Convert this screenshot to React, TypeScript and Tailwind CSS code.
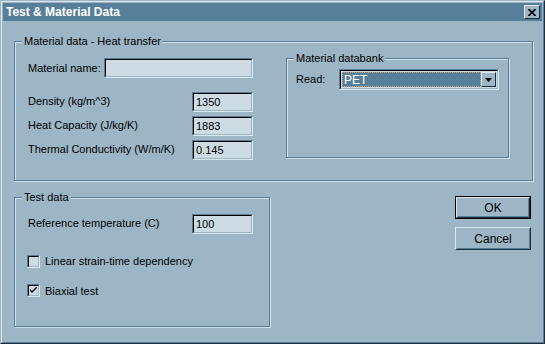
import React from 'react'

const font = { fontFamily: '"Liberation Sans", Arial, sans-serif' }

const Sunken: React.FC<{ className?: string; children?: React.ReactNode }> = ({ className = '', children }) => (
  <div className={`border border-t-[#587f99] border-l-[#587f99] border-b-[#dde8ee] border-r-[#dde8ee] ${className}`}>
    <div className="h-full w-full border border-t-black border-l-black border-b-[#9cb6c5] border-r-[#9cb6c5] bg-[#cddce4] flex items-center pl-[2px] text-black">
      {children}
    </div>
  </div>
)

const Group: React.FC<{ title: string; className?: string; children?: React.ReactNode }> = ({ title, className = '', children }) => (
  <div className={`relative border border-[#587f99] shadow-[inset_1px_1px_0_#d3e0e7,1px_1px_0_#d3e0e7] ${className}`}>
    <span className="absolute left-[7px] top-[-8px] bg-[#9cb6c5] px-[2px] leading-[14px] text-black">{title}</span>
    {children}
  </div>
)

const Checkbox: React.FC<{ checked?: boolean; label: string }> = ({ checked, label }) => (
  <div className="flex items-center gap-[5px]">
    <div className="w-[13px] h-[13px] border border-t-[#587f99] border-l-[#587f99] border-b-[#dde8ee] border-r-[#dde8ee]">
      <div className="w-full h-full border border-t-black border-l-black border-b-[#9cb6c5] border-r-[#9cb6c5] bg-[#cddce4] flex items-center justify-center">
        {checked && (
          <svg width="7" height="7" viewBox="0 0 7 7">
            <path d="M0 2 L0 4 L2 6 L7 1 L7 -1 L2 4 Z" fill="black" />
          </svg>
        )}
      </div>
    </div>
    <span>{label}</span>
  </div>
)

const Button: React.FC<{ label: string; isDefault?: boolean }> = ({ label, isDefault }) => (
  <div className={`w-[76px] ${isDefault ? 'h-[23px] border border-black' : 'h-[23px]'}`}>
    <div className="h-full w-full border border-t-[#dde8ee] border-l-[#dde8ee] border-b-[#1e2e3a] border-r-[#1e2e3a]">
      <div className="h-full w-full border border-t-[#9cb6c5] border-l-[#9cb6c5] border-b-[#587f99] border-r-[#587f99] flex items-center justify-center text-black text-[12px]">
        {label}
      </div>
    </div>
  </div>
)

export default function App() {
  return (
    <div style={font} className="w-[545px] h-[344px] bg-[#9cb6c5] text-[11px] text-black overflow-hidden">
      <div className="w-full h-full border border-t-[#9cb6c5] border-l-[#9cb6c5] border-b-[#1e2e3a] border-r-[#1e2e3a]">
        <div className="w-full h-full border border-t-[#dde8ee] border-l-[#dde8ee] border-b-[#587f99] border-r-[#587f99] p-px flex flex-col">
          {/* title bar */}
          <div className="h-[18px] bg-[#587f99] flex items-center justify-between pl-[3px] pr-[2px] shrink-0">
            <span className="text-white font-bold text-[12px]">Test &amp; Material Data</span>
            <div className="w-[16px] h-[14px] border border-t-[#dde8ee] border-l-[#dde8ee] border-b-[#1e2e3a] border-r-[#1e2e3a] bg-[#9cb6c5] flex items-center justify-center">
              <svg width="8" height="7" viewBox="0 0 8 7">
                <path d="M0.5 0 L7.5 7 M7.5 0 L0.5 7" stroke="black" strokeWidth="1.6" />
              </svg>
            </div>
          </div>

          {/* material group */}
          <Group title="Material data - Heat transfer" className="ml-[11px] mt-[20px] w-[519px] h-[140px] shrink-0">
            <div className="flex pt-[16px]">
              <div className="pl-[13px] w-[271px] shrink-0">
                <div className="flex items-center">
                  <span className="w-[76px] pt-[1px]">Material name:</span>
                  <Sunken className="w-[149px] h-[20px]" />
                </div>
                <div className="mt-[14px] flex flex-col gap-[4px]">
                  {[
                    ['Density (kg/m^3)', '1350'],
                    ['Heat Capacity (J/kg/K)', '1883'],
                    ['Thermal Conductivity (W/m/K)', '0.145'],
                  ].map(([label, value]) => (
                    <div key={label} className="flex items-center">
                      <span className="w-[164px] pb-[2px]">{label}</span>
                      <Sunken className="w-[61px] h-[20px]">{value}</Sunken>
                    </div>
                  ))}
                </div>
              </div>

              <Group title="Material databank" className="w-[223px] h-[100px]">
                <div className="flex items-center pl-[9px] pt-[10px]">
                  <span className="w-[43px]">Read:</span>
                  <div className="w-[160px] h-[21px] border border-t-[#587f99] border-l-[#587f99] border-b-[#dde8ee] border-r-[#dde8ee]">
                    <div className="h-full w-full border border-t-black border-l-black border-b-[#9cb6c5] border-r-[#9cb6c5] bg-[#cddce4] flex p-px">
                      <div className="flex-1 bg-[#587f99] border border-dotted border-[#c9a37a] text-white flex items-center pl-px text-[12px]">
                        PET
                      </div>
                      <div className="w-[15px] border border-t-[#dde8ee] border-l-[#dde8ee] border-b-[#1e2e3a] border-r-[#1e2e3a] bg-[#9cb6c5] flex items-center justify-center">
                        <svg width="7" height="4" viewBox="0 0 7 4">
                          <path d="M0 0 L7 0 L3.5 4 Z" fill="black" />
                        </svg>
                      </div>
                    </div>
                  </div>
                </div>
              </Group>
            </div>
          </Group>

          {/* bottom area */}
          <div className="flex mt-[16px] ml-[11px]">
            <Group title="Test data" className="w-[256px] h-[130px] shrink-0">
              <div className="pl-[13px] pt-[16px]">
                <div className="flex items-center">
                  <span className="w-[164px] pb-[2px]">Reference temperature (C)</span>
                  <Sunken className="w-[61px] h-[20px]">100</Sunken>
                </div>
                <div className="mt-[19px] ml-[-1px]">
                  <Checkbox label="Linear strain-time dependency" />
                </div>
                <div className="mt-[13px] ml-[-1px]">
                  <Checkbox checked label="Biaxial test" />
                </div>
              </div>
            </Group>
            <div className="ml-[185px] flex flex-col gap-[8px] mt-[-1px]">
              <Button label="OK" isDefault />
              <Button label="Cancel" />
            </div>
          </div>
        </div>
      </div>
    </div>
  )
}
